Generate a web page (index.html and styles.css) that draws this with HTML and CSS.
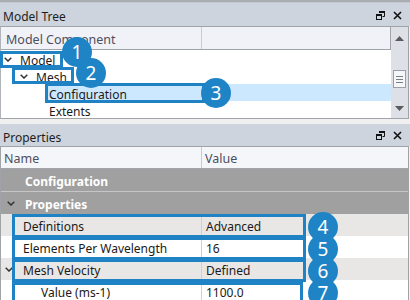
FILE: index.html
```html
<!DOCTYPE html>
<html>
<head>
<meta charset="utf-8">
<link rel="stylesheet" href="styles.css">
</head>
<body>
<div class="screen">
  <div class="topstrip"></div>
  <section class="panel tree-panel">
    <header class="titlebar">
      <span class="title">Model Tree</span>
      <span class="tools">
        <svg width="9" height="9" viewBox="0 0 9 9"><path d="M3.5 0.5h5v5h-2" fill="none" stroke="#111" stroke-width="1"/><rect x="3" y="0" width="6" height="2" fill="#111"/><rect x="0.5" y="3.5" width="5" height="5" fill="none" stroke="#111"/><rect x="0" y="3" width="6" height="2" fill="#111"/></svg>
        <svg width="9" height="9" viewBox="0 0 9 9"><path d="M1 1L8 8M8 1L1 8" stroke="#111" stroke-width="1.6"/></svg>
      </span>
    </header>
    <div class="tree-body">
      <div class="tree-main">
        <div class="thead">
          <div class="th th-first">Model Component</div>
          <div class="th th-rest"></div>
        </div>
        <div class="trow lvl0"><svg class="chev" width="8" height="5" viewBox="0 0 8 5"><path d="M0.7 0.7L4 4L7.3 0.7" fill="none" stroke="#333" stroke-width="1.5"/></svg><span>Model</span></div>
        <div class="trow lvl1"><svg class="chev" width="8" height="5" viewBox="0 0 8 5"><path d="M0.7 0.7L4 4L7.3 0.7" fill="none" stroke="#333" stroke-width="1.5"/></svg><span>Mesh</span></div>
        <div class="trow lvl2 selected"><span>Configuration</span></div>
        <div class="trow lvl2"><span>Extents</span></div>
      </div>
      <div class="vscroll">
        <svg class="arrow" width="9" height="5" viewBox="0 0 9 5"><path d="M0 5L4.5 0L9 5Z" fill="#5a5a5a"/></svg>
        <div class="track"><div class="thumb"><i></i><i></i><i></i></div></div>
        <svg class="arrow" width="9" height="5" viewBox="0 0 9 5"><path d="M0 0L4.5 5L9 0Z" fill="#5a5a5a"/></svg>
      </div>
    </div>
  </section>
  <div class="gap"></div>
  <section class="panel props-panel">
    <header class="titlebar">
      <span class="title">Properties</span>
      <span class="tools">
        <svg width="9" height="9" viewBox="0 0 9 9"><path d="M3.5 0.5h5v5h-2" fill="none" stroke="#111" stroke-width="1"/><rect x="3" y="0" width="6" height="2" fill="#111"/><rect x="0.5" y="3.5" width="5" height="5" fill="none" stroke="#111"/><rect x="0" y="3" width="6" height="2" fill="#111"/></svg>
        <svg width="9" height="9" viewBox="0 0 9 9"><path d="M1 1L8 8M8 1L1 8" stroke="#111" stroke-width="1.6"/></svg>
      </span>
    </header>
    <div class="grid">
      <div class="ghead">
        <div class="gh gh-name">Name</div>
        <div class="gh gh-value">Value</div>
      </div>
      <div class="cat cat-first"><span class="cat-label">Configuration</span></div>
      <div class="cat"><svg class="chev cat-chev" width="8" height="5" viewBox="0 0 8 5"><path d="M0.7 0.7L4 4L7.3 0.7" fill="none" stroke="#333" stroke-width="1.5"/></svg><span class="cat-label">Properties</span></div>
      <div class="prow shade"><div class="gut"></div><div class="pname">Definitions</div><div class="pval">Advanced</div></div>
      <div class="prow"><div class="gut"></div><div class="pname">Elements Per Wavelength</div><div class="pval">16</div></div>
      <div class="prow shade"><div class="gut"><svg class="chev" width="8" height="5" viewBox="0 0 8 5"><path d="M0.7 0.7L4 4L7.3 0.7" fill="none" stroke="#333" stroke-width="1.5"/></svg></div><div class="pname">Mesh Velocity</div><div class="pval">Defined</div></div>
      <div class="prow"><div class="gut"></div><div class="pname sub">Value (ms-1)</div><div class="pval">1100.0</div></div>
    </div>
  </section>

  <div class="annotations">
    <div class="box box-model"></div>
    <div class="box box-mesh"></div>
    <div class="box box-config"></div>
    <div class="box box-def"></div>
    <div class="box box-epw"></div>
    <div class="box box-mv"></div>
    <div class="box box-val"></div>
    <div class="badge b1">1</div>
    <div class="badge b2">2</div>
    <div class="badge b3">3</div>
    <div class="badge b4">4</div>
    <div class="badge b5">5</div>
    <div class="badge b6">6</div>
    <div class="badge b7">7</div>
  </div>
</div>
</body>
</html>
```

FILE: styles.css
```css
* { box-sizing: border-box; }
html, body { margin: 0; padding: 0; }
body {
  width: 410px;
  height: 300px;
  overflow: hidden;
  background: #f0f0f0;
  font-family: "Noto Sans", "Open Sans", sans-serif;
  font-size: 12px;
  color: #1a1a1a;
}
.screen { position: relative; width: 410px; height: 300px; overflow: hidden; }
.topstrip { height: 3px; background: #a9adb2; border-bottom: 1px solid #c4c9cf; }

.titlebar {
  display: flex;
  align-items: center;
  justify-content: space-between;
  background: #cdd4dd;
  padding: 0 8px 0 3px;
  color: #1e1e1e;
}
.titlebar .title { padding-top: 4px; }
.tree-panel .titlebar { height: 23px; }
.props-panel .titlebar { height: 22px; }
.tools { display: flex; gap: 8px; align-items: center; padding-top: 1px; }
.tools svg { display: block; }

.tree-body {
  display: flex;
  height: 93px;
  border: 1px solid #a0a4a8;
  border-left-color: #b0b4b8;
  background: #fff;
  width: 409px;
}
.tree-main { flex: 1; display: flex; flex-direction: column; }
.thead {
  display: flex;
  height: 24px;
  background: #f0f2f7;
  border-bottom: 1px solid #a0a4a8;
  color: #4e4e5e;
  font-size: 12.5px;
}
.th { display: flex; align-items: center; padding-top: 2px; }
.th-first { width: 201px; padding-left: 5px; border-right: 1px solid #c8ccd2; }
.th-rest { flex: 1; border-right: 1px solid #a0a4a8; }
.trow { height: 17px; display: flex; align-items: center; white-space: nowrap; padding-top: 3px; }
.trow .chev { margin-right: 8px; margin-top: -1px; }
.lvl0 { padding-left: 3px; }
.lvl1 { padding-left: 19px; }
.lvl2 { padding-left: 48px; }
.selected { background: #cce8ff; margin-left: 45px; padding-left: 3px; }
.chev { display: block; flex: none; }

.vscroll {
  width: 17px;
  background: #dde1e7;
  display: flex;
  flex-direction: column;
  align-items: center;
  padding-top: 9px;
  padding-bottom: 7px;
}
.vscroll .arrow { display: block; }
.track { flex: 1; width: 100%; padding-top: 29px; display: flex; justify-content: center; }
.thumb {
  width: 13px;
  height: 18px;
  background: #f4f6f8;
  border: 1px solid #9aa0a8;
  display: flex;
  flex-direction: column;
  justify-content: center;
  align-items: center;
  gap: 2px;
}
.thumb i { display: block; width: 7px; height: 1px; background: #7a7f86; }

.gap { height: 5px; }

.grid { width: 409px; border-left: 1px solid #a0a4a8; border-right: 1px solid #a0a4a8; }
.ghead {
  display: flex;
  height: 23px;
  background: #f4f6f9;
  border-top: 1px solid #a0a4a8;
  border-bottom: 1px solid #a0a4a8;
  color: #4e4e5e;
  font-size: 12.5px;
}
.gh { display: flex; align-items: center; padding-left: 3px; padding-top: 2px; }
.gh-name { width: 201px; border-right: 1px solid #c8ccd2; }
.gh-value { flex: 1; padding-left: 3px; }

.cat {
  height: 22px;
  background: #a0a0a0;
  display: flex;
  align-items: center;
  color: #fff;
  font-weight: bold;
}
.cat-label { padding-top: 2px; }
.cat-first { border-bottom: 1px solid #c6c6c6; height: 23px; }
.cat-label { margin-left: 24px; }
.cat-chev { margin-left: 6px; }
.cat-chev + .cat-label { margin-left: 10px; }

.prow { display: flex; height: 22px; background: #fff; }
.prow.shade { background: #e8e7e5; }
.gut { width: 12px; display: flex; align-items: center; padding-left: 4px; padding-top: 1px; }
.pname { width: 189px; padding-left: 10px; padding-top: 2px; display: flex; align-items: center; border-right: 1px solid #d0d0d0; white-space: nowrap; }
.pname.sub { padding-left: 28px; }
.pval { flex: 1; padding-left: 4px; padding-top: 2px; display: flex; align-items: center; }

.annotations { position: absolute; inset: 0; pointer-events: none; }
.box { position: absolute; border: 3px solid #1e82c4; }
.box-model { left: 0; top: 51px; width: 63px; height: 17px; }
.box-mesh { left: 12px; top: 67px; width: 62px; height: 17px; }
.box-config { left: 45px; top: 83px; width: 160px; height: 20px; }
.box-def { left: 12px; top: 214px; width: 294px; height: 24px; }
.box-epw { left: 12px; top: 237px; width: 294px; height: 23px; }
.box-mv { left: 12px; top: 259px; width: 294px; height: 23px; }
.box-val { left: 12px; top: 282px; width: 291px; height: 30px; }
.badge {
  position: absolute;
  width: 30px;
  height: 30px;
  border-radius: 50%;
  background: #1f84c6;
  color: #fff;
  font-size: 19px;
  line-height: 30px;
  text-align: center;
}
.b1 { left: 62px; top: 37px; }
.b2 { left: 76px; top: 58px; }
.b3 { left: 201px; top: 78px; }
.b4 { left: 308px; top: 212px; }
.b5 { left: 308px; top: 234px; }
.b6 { left: 308px; top: 256px; }
.b7 { left: 308px; top: 278px; }
```
